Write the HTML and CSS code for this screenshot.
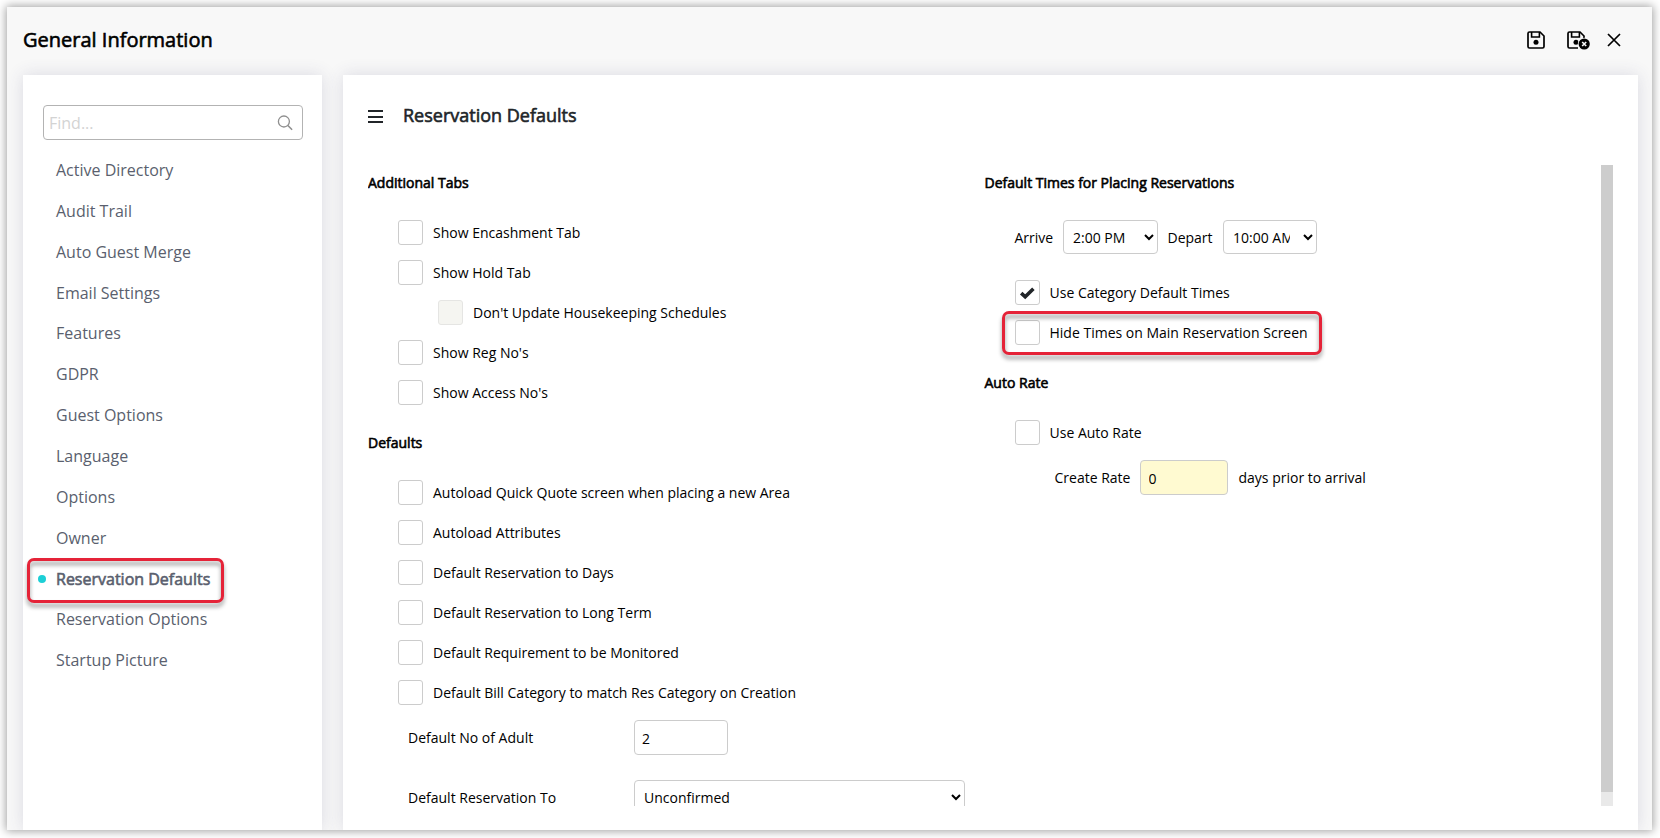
FILE: index.html
```html
<!DOCTYPE html>
<html lang="en">
<head>
  <meta charset="UTF-8">
  <title>General Information</title>
  <meta name="viewport" content="width=device-width, initial-scale=1">
  <link rel="stylesheet" href="styles.css">
</head>
<body>

  <div class="window">
    <header class="window-header">
      <h1>General Information</h1>
      <div class="actions">
        <!-- Save -->
        <svg class="icon-save" width="18" height="18" viewBox="0 0 18 18">
          <path d="M2.5 1H13L17 5V15.5Q17 17 15.5 17H2.5Q1 17 1 15.5V2.5Q1 1 2.5 1Z" fill="none" stroke="#000" stroke-width="1.7"/>
          <path d="M4.6 1V6H12.4V1" fill="none" stroke="#000" stroke-width="1.6"/>
          <circle cx="9" cy="11.3" r="2.5"/>
        </svg>
        <!-- Save and exit -->
        <svg class="icon-save-exit" width="23" height="19" viewBox="0 0 23 19">
          <path d="M11 17H2.5Q1 17 1 15.5V2.5Q1 1 2.5 1H13L17 5V7" fill="none" stroke="#000" stroke-width="1.7"/>
          <path d="M4.6 1V6H12.4V1" fill="none" stroke="#000" stroke-width="1.6"/>
          <circle cx="9" cy="11.3" r="2.5"/>
          <circle cx="17.2" cy="13" r="6.3" fill="#f8f8f8"/>
          <circle cx="17.2" cy="13" r="5.6"/>
          <path d="M15.2 11L19.2 15M19.2 11L15.2 15" stroke="#f8f8f8" stroke-width="1.6"/>
        </svg>
        <!-- Close -->
        <svg class="icon-close" width="14" height="14" viewBox="0 0 14 14">
          <path d="M1 1L13 13M13 1L1 13" stroke="#000" stroke-width="1.7"/>
        </svg>
      </div>
    </header>

    <div class="panels">
      <aside class="sidebar">
        <div class="search">
          <input type="text" placeholder="Find...">
          <svg width="16" height="16" viewBox="0 0 16 16">
            <circle cx="6.9" cy="6.5" r="5.5" fill="none" stroke="#8f8f8f" stroke-width="1.3"/>
            <path d="M10.9 10.5L15.1 14.7" stroke="#8f8f8f" stroke-width="1.6"/>
          </svg>
        </div>
        <ul class="menu">
          <li>Active Directory</li>
          <li>Audit Trail</li>
          <li>Auto Guest Merge</li>
          <li>Email Settings</li>
          <li>Features</li>
          <li>GDPR</li>
          <li>Guest Options</li>
          <li>Language</li>
          <li>Options</li>
          <li>Owner</li>
          <li class="active">Reservation Defaults<span class="highlight highlight-menu"></span></li>
          <li>Reservation Options</li>
          <li>Startup Picture</li>
        </ul>
      </aside>

      <main class="content">
        <div class="content-header">
          <div class="burger"><span></span><span></span><span></span></div>
          <h2>Reservation Defaults</h2>
        </div>

        <div class="scroll-area">
          <div class="column">
            <section>
              <h3>Additional Tabs</h3>
              <label class="check"><input type="checkbox">Show Encashment Tab</label>
              <label class="check"><input type="checkbox">Show Hold Tab</label>
              <label class="check nested"><input type="checkbox" disabled>Don't Update Housekeeping Schedules</label>
              <label class="check"><input type="checkbox">Show Reg No's</label>
              <label class="check"><input type="checkbox">Show Access No's</label>
            </section>
            <section>
              <h3>Defaults</h3>
              <label class="check"><input type="checkbox">Autoload Quick Quote screen when placing a new Area</label>
              <label class="check"><input type="checkbox">Autoload Attributes</label>
              <label class="check"><input type="checkbox">Default Reservation to Days</label>
              <label class="check"><input type="checkbox">Default Reservation to Long Term</label>
              <label class="check"><input type="checkbox">Default Requirement to be Monitored</label>
              <label class="check"><input type="checkbox">Default Bill Category to match Res Category on Creation</label>
              <div class="field">
                <span class="field-label">Default No of Adult</span>
                <input class="text-input adults" type="text" value="2">
              </div>
              <div class="field">
                <span class="field-label">Default Reservation To</span>
                <select class="reservation-to"><option>Unconfirmed</option></select>
              </div>
            </section>
          </div>

          <div class="column">
            <section>
              <h3>Default Times for Placing Reservations</h3>
              <div class="times">
                <span class="arrive">Arrive</span>
                <select class="arrive-time"><option>2:00 PM</option></select>
                <span class="depart">Depart</span>
                <select class="depart-time"><option>10:00 AM</option></select>
              </div>
              <label class="check"><input type="checkbox" checked>Use Category Default Times</label>
              <label class="check"><input type="checkbox">Hide Times on Main Reservation Screen<span class="highlight highlight-check"></span></label>
            </section>
            <section>
              <h3>Auto Rate</h3>
              <label class="check"><input type="checkbox">Use Auto Rate</label>
              <div class="rate">
                <span class="rate-label">Create Rate</span>
                <input class="text-input days" type="text" value="0">
                <span>days prior to arrival</span>
              </div>
            </section>
          </div>

          <div class="scrollbar"><div class="thumb"></div></div>
        </div>
      </main>
    </div>
  </div>

</body>
</html>
```
FILE: styles.css
```css
* {
  margin: 0;
  padding: 0;
  box-sizing: border-box;
}

body {
  height: 838px;
  padding: 7px 8px 8px 7px;
  overflow: hidden;
  background: #fff;
  font-family: "Open Sans", sans-serif;
  font-size: 14px;
  color: #000;
}

h1, h2, h3, .menu .active {
  font-weight: 400;
  -webkit-text-stroke: 0.6px currentColor;
}

.window {
  height: 823px;
  display: flex;
  flex-direction: column;
  background: #f8f8f8;
  box-shadow: 0 0 9px 1px rgba(0, 0, 0, 0.38);
  overflow: hidden;
}

.window-header {
  height: 68px;
  flex: none;
  display: flex;
  justify-content: space-between;
  padding: 0 31px 0 16px;
}

h1 {
  font-size: 20px;
  line-height: 27px;
  padding-top: 19px;
}

.actions {
  display: flex;
  align-items: flex-start;
  padding-top: 23.5px;
}

.icon-save-exit {
  margin-left: 22px;
}

.icon-close {
  margin: 2px 0 0 17px;
}

/* Panels */
.panels {
  flex: 1;
  display: flex;
  gap: 21px;
  padding: 0 14px 0 16px;
}

.sidebar, .content {
  background: #fff;
  box-shadow: 0 0 16px rgba(60, 60, 110, 0.16);
}

.sidebar {
  width: 299px;
  padding: 30px 19px 0 20px;
}

.search {
  height: 35px;
  display: flex;
  align-items: center;
  border: 1px solid #b3b3b3;
  border-radius: 4px;
  padding: 0 9px 0 5px;
}

.search input {
  flex: 1;
  min-width: 0;
  border: none;
  outline: none;
  font: 16px "Open Sans", sans-serif;
}

.search input::placeholder {
  color: #d3d3d3;
}

.menu {
  list-style: none;
  padding: 10px 0 0 13px;
  font-size: 16px;
  color: #5a5f6e;
}

.menu li {
  position: relative;
  height: 40.85px;
  line-height: 40.85px;
}

.menu .active {
  padding-top: 1px;
}

.menu .active::before {
  content: "";
  position: absolute;
  left: -18px;
  top: 17px;
  width: 8px;
  height: 8px;
  border-radius: 50%;
  background: #1ccfd6;
}

.highlight {
  position: absolute;
  border: 3px solid #e52338;
  border-radius: 7px;
  filter: drop-shadow(0 4px 2px rgba(0, 0, 0, 0.4));
  pointer-events: none;
}

.highlight-menu {
  left: -29px;
  top: 0;
  width: 197px;
  height: 45px;
}

/* Main content */
.content {
  flex: 1;
  padding: 0 25px;
}

.content-header {
  height: 90px;
  display: flex;
  align-items: flex-start;
  color: #212529;
}

.burger {
  width: 15px;
  margin: 35px 20px 0 0;
  display: flex;
  flex-direction: column;
  gap: 3.5px;
}

.burger span {
  height: 2px;
  background: #212529;
}

h2 {
  font-size: 18px;
  line-height: 24px;
  padding-top: 28px;
}

.scroll-area {
  height: 641px;
  display: flex;
  overflow: hidden;
}

.column {
  width: 616.5px;
  flex: none;
}

section {
  padding-top: 8px;
}

section + section {
  padding-top: 21px;
}

h3 {
  font-size: 14px;
  line-height: 20px;
  margin-bottom: 19px;
}

.check {
  position: relative;
  height: 40px;
  display: flex;
  align-items: flex-start;
  gap: 10px;
  padding: 8px 0 0 30px;
  line-height: 25px;
}

.check.nested {
  padding-left: 70px;
}

.check input {
  appearance: none;
  width: 25px;
  height: 25px;
  flex: none;
  border: 1px solid #ccc;
  border-radius: 3px;
  background: #fff;
}

.check input:disabled {
  background: #f5f5f1;
  border-color: #e5e5e3;
}

.check input:checked {
  background: url("data:image/svg+xml,%3Csvg xmlns='http://www.w3.org/2000/svg' viewBox='0 0 23 23'%3E%3Cpath d='M5.2 12.2L9.2 15.8L17.4 7.8' fill='none' stroke='%23212529' stroke-width='3.6'/%3E%3C/svg%3E") center no-repeat;
}

.highlight-check {
  left: 17px;
  top: -1px;
  width: 320px;
  height: 44px;
}

select, .text-input {
  border: 1px solid #ccc;
  border-radius: 4px;
  background: #fff;
  font: 14px "Open Sans", sans-serif;
  color: #000;
}

select {
  height: 34px;
  padding: 0 5px;
}

.text-input {
  height: 35px;
  padding: 2px 7px 0;
}

.field {
  height: 60px;
  display: flex;
  align-items: flex-start;
  padding: 8px 0 0 40px;
}

.field-label {
  width: 226px;
  line-height: 35px;
}

.adults {
  width: 94px;
}

.reservation-to {
  width: 331px;
  height: 35px;
}

.times {
  height: 60px;
  display: flex;
  align-items: flex-start;
  padding: 8px 0 0 30px;
  line-height: 35px;
}

.arrive {
  width: 48.5px;
}

.arrive-time {
  width: 95px;
}

.depart {
  width: 65px;
  padding-left: 9.5px;
}

.depart-time {
  width: 94px;
  padding-right: 10px;
}

.rate {
  display: flex;
  padding: 8px 0 0 70px;
  line-height: 35px;
}

.rate-label {
  width: 85.5px;
}

.days {
  width: 88px;
  margin-right: 10.5px;
  padding-left: 7.5px;
  background: #fffad1;
}

.scrollbar {
  width: 12px;
  flex: none;
  background: #e9e9e9;
}

.thumb {
  height: 627px;
  background: #cdcdcd;
}
```
